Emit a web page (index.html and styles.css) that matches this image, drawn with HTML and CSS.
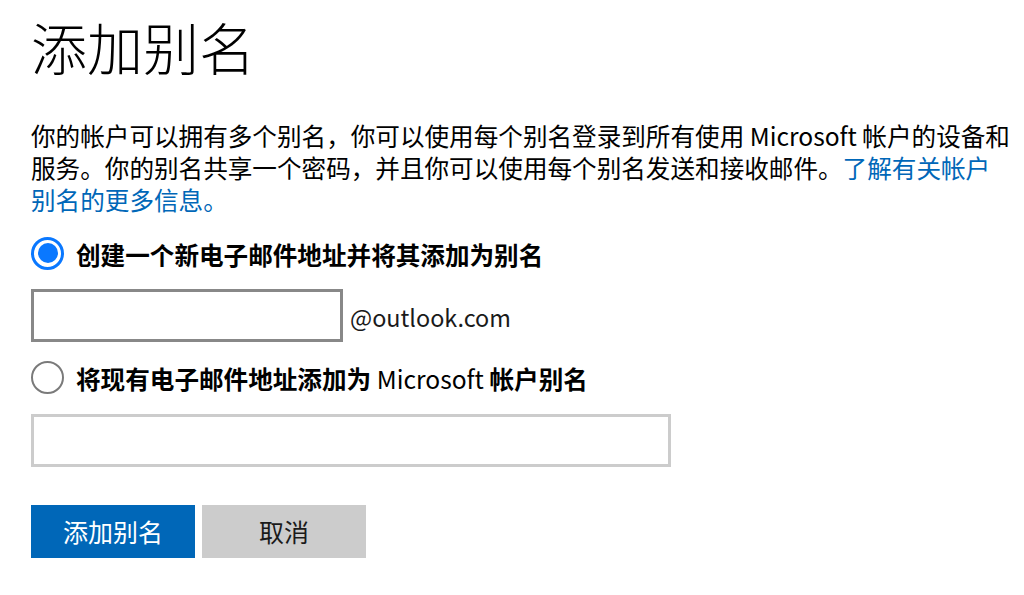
FILE: index.html
```html
<!DOCTYPE html>
<html lang="zh-CN">
<head>
<meta charset="utf-8">
<title>添加别名</title>
<link rel="stylesheet" href="styles.css">
</head>
<body>
<main class="page">
  <h1 class="title">添加别名</h1>
  <p class="intro">你的帐户可以拥有多个别名，你可以使用每个别名登录到所有使用 Microsoft 帐户的设备和服务。你的别名共享一个密码，并且你可以使用每个别名发送和接收邮件。<a class="link" href="#">了解有关帐户别名的更多信息。</a></p>

  <div class="option">
    <span class="radio radio-on"><span class="dot"></span></span>
    <span class="option-label">创建一个新电子邮件地址并将其添加为别名</span>
  </div>
  <div class="field-row">
    <span class="textbox textbox-new"></span>
    <span class="suffix">@outlook.com</span>
  </div>

  <div class="option">
    <span class="radio"></span>
    <span class="option-label">将现有电子邮件地址添加为 <span class="latin">Microsoft</span> 帐户别名</span>
  </div>
  <div class="field-row">
    <span class="textbox textbox-existing"></span>
  </div>

  <div class="actions">
    <button class="btn btn-primary" type="button">添加别名</button>
    <button class="btn btn-secondary" type="button">取消</button>
  </div>
</main>
</body>
</html>
```

FILE: styles.css
```css
html, body {
  margin: 0;
  padding: 0;
  background: #ffffff;
}

body {
  font-family: "Noto Sans CJK SC", "Noto Sans", sans-serif;
  color: #000000;
}

.page {
  padding: 14px 0 0 31px;
}

.title {
  margin: 0;
  font-size: 56px;
  line-height: 64px;
  font-weight: 300;
  color: #000000;
}

.intro {
  margin: 40.6px 0 0 0;
  width: 980px;
  font-size: 24.6px;
  line-height: 32px;
}

.link {
  color: #0067b8;
  text-decoration: none;
}

.option {
  display: flex;
  align-items: center;
  gap: 12px;
  margin-top: 22px;
  height: 33px;
}

.field-row + .option {
  margin-top: 19px;
}

.radio {
  box-sizing: border-box;
  width: 33px;
  height: 33px;
  border-radius: 50%;
  border: 2px solid #7a7a7a;
  display: flex;
  align-items: center;
  justify-content: center;
  flex: none;
}

.radio-on {
  border: 3px solid #0a78ff;
}

.dot {
  width: 20px;
  height: 20px;
  border-radius: 50%;
  background: #0a78ff;
}

.option-label {
  font-size: 24.6px;
  font-weight: 700;
  line-height: 33px;
  padding-top: 2px;
}

.latin {
  font-weight: 400;
}

.field-row {
  display: flex;
  align-items: center;
  margin-top: 19.5px;
}

.textbox {
  box-sizing: border-box;
  display: block;
  height: 53px;
  background: #ffffff;
}

.textbox-new {
  width: 312px;
  border: 3px solid #888888;
}

.textbox-existing {
  width: 640px;
  border: 3px solid #cccccc;
}

.suffix {
  margin-left: 7px;
  font-size: 23.4px;
  line-height: 32px;
  color: #1a1a1a;
  padding-top: 2px;
}

.actions {
  display: flex;
  gap: 7px;
  margin-top: 38px;
}

.btn {
  box-sizing: border-box;
  width: 164px;
  height: 53px;
  border: none;
  padding: 0;
  font-family: "Noto Sans CJK SC", "Noto Sans", sans-serif;
  font-size: 25px;
  line-height: 53px;
  cursor: pointer;
}

.btn-primary {
  background: #0067b8;
  color: #ffffff;
}

.btn-secondary {
  background: #cccccc;
  color: #1a1a1a;
}
```
